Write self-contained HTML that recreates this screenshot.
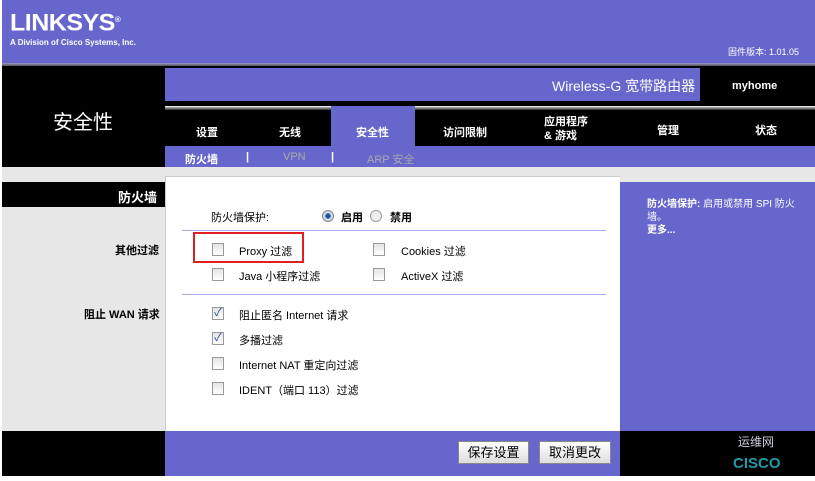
<!DOCTYPE html>
<html><head><meta charset="utf-8"><style>
*{margin:0;padding:0;box-sizing:border-box}
body{width:815px;height:481px;background:#fff;font-family:"Liberation Sans","Noto Sans CJK SC",sans-serif;position:relative;overflow:hidden;font-size:11px}
.a{position:absolute}
.p{background:#6666cc}
.cb{position:absolute;width:12px;height:13px;border:1px solid #9a9a9a;background:linear-gradient(#e4e4e4,#fff)}
.t{position:absolute;white-space:nowrap}
.w{color:#fff;font-weight:bold}
.k{color:#000;font-weight:bold}
</style></head><body>
<div class="a p" style="left:2px;top:0;width:813px;height:63px"></div>
<div class="a" style="left:2px;top:63px;width:813px;height:3px;background:linear-gradient(#9999cc,#555)"></div>
<div class="t w" style="left:10px;top:9px;font-size:25px;letter-spacing:-0.5px;font-family:'Liberation Sans',sans-serif;transform:scaleY(0.95)">LINKSYS<sup style="font-size:8px">®</sup></div>
<div class="t" style="left:10px;top:38px;color:#fff;font-size:8px;font-weight:bold">A Division of Cisco Systems, Inc.</div>
<div class="t" style="left:728px;top:45px;color:#fff;font-size:9px">固件版本: 1.01.05</div>
<div class="a" style="left:2px;top:66px;width:813px;height:101px;background:#000"></div>
<div class="a p" style="left:165px;top:68px;width:535px;height:33px"></div>
<div class="t" style="left:552px;top:76px;color:#fff;font-size:14px">Wireless-G 宽带路由器</div>
<div class="t" style="left:732px;top:80px;color:#fff;font-size:11px;font-weight:bold">myhome</div>
<div class="t" style="left:53px;top:106px;color:#fff;font-size:20px">安全性</div>
<div class="a" style="left:165px;top:106px;width:650px;height:4px;background:linear-gradient(#fff,#888,#333)"></div>
<div class="a p" style="left:331px;top:106px;width:84px;height:41px"></div>
<div class="t w" style="left:196px;top:124px">设置</div>
<div class="t w" style="left:279px;top:124px">无线</div>
<div class="t w" style="left:356px;top:124px">安全性</div>
<div class="t w" style="left:443px;top:124px">访问限制</div>
<div class="t w" style="left:544px;top:115px;line-height:14px">应用程序<br>&amp; 游戏</div>
<div class="t w" style="left:657px;top:122px">管理</div>
<div class="t w" style="left:755px;top:122px">状态</div>
<div class="a p" style="left:165px;top:146px;width:650px;height:21px"></div>
<div class="t w" style="left:185px;top:151px">防火墙</div>
<div class="t w" style="left:246px;top:151px">|</div>
<div class="t" style="left:283px;top:151px;color:#aaa">VPN</div>
<div class="t w" style="left:331px;top:151px">|</div>
<div class="t" style="left:367px;top:151px;color:#aaa">ARP 安全</div>
<div class="a" style="left:2px;top:167px;width:813px;height:264px;background:#e7e7e7"></div>
<div class="a" style="left:165px;top:176px;width:455px;height:255px;background:#fff;border-top:1px solid #ccc;border-left:1px solid #ccc"></div>
<div class="a p" style="left:620px;top:182px;width:195px;height:249px"></div>
<div class="a" style="left:2px;top:182px;width:163px;height:25px;background:#000"></div>
<div class="t w" style="left:118px;top:187px;font-size:13px">防火墙</div>
<div class="t k" style="left:115px;top:242px">其他过滤</div>
<div class="t k" style="left:84px;top:306px">阻止 WAN 请求</div>
<div class="t" style="left:211px;top:209px">防火墙保护:</div>
<div class="a" style="left:322px;top:210px;width:12px;height:12px;border-radius:50%;border:1px solid #888;background:radial-gradient(#2050a0 30%,#cde 45%)"></div>
<div class="t" style="left:341px;top:209px;font-weight:bold">启用</div>
<div class="a" style="left:370px;top:210px;width:12px;height:12px;border-radius:50%;border:1px solid #999;background:#eee"></div>
<div class="t" style="left:390px;top:209px;font-weight:bold">禁用</div>
<div class="a" style="left:182px;top:230px;width:424px;height:1px;background:#aaaaee"></div>
<div class="a" style="left:182px;top:294px;width:424px;height:1px;background:#aaaaee"></div>
<div class="a" style="left:193px;top:232px;width:111px;height:31px;border:2px solid #e02020"></div>
<div class="cb" style="left:212px;top:243px"></div><div class="t" style="left:239px;top:243px">Proxy 过滤</div>
<div class="cb" style="left:373px;top:243px"></div><div class="t" style="left:401px;top:243px">Cookies 过滤</div>
<div class="cb" style="left:212px;top:268px"></div><div class="t" style="left:239px;top:268px">Java 小程序过滤</div>
<div class="cb" style="left:373px;top:268px"></div><div class="t" style="left:401px;top:268px">ActiveX 过滤</div>
<div class="cb" style="left:212px;top:307px;color:#2040a0;font-size:11px;line-height:11px;text-align:center">✓</div><div class="t" style="left:239px;top:307px">阻止匿名 Internet 请求</div>
<div class="cb" style="left:212px;top:332px;color:#2040a0;font-size:11px;line-height:11px;text-align:center">✓</div><div class="t" style="left:239px;top:332px">多播过滤</div>
<div class="cb" style="left:212px;top:357px"></div><div class="t" style="left:239px;top:357px">Internet NAT 重定向过滤</div>
<div class="cb" style="left:212px;top:382px"></div><div class="t" style="left:239px;top:382px">IDENT（端口 113）过滤</div>
<div class="t" style="left:647px;top:198px;color:#fff;width:155px;white-space:normal;line-height:13px;font-size:10px"><b>防火墙保护:</b> 启用或禁用 SPI 防火墙。<br><b>更多...</b></div>
<div class="a" style="left:2px;top:431px;width:813px;height:45px;background:#000"></div>
<div class="a p" style="left:165px;top:431px;width:455px;height:45px"></div>
<div class="a" style="left:458px;top:441px;width:71px;height:23px;background:linear-gradient(#fff,#ddd);border:1px solid #888;font-size:13px;text-align:center;line-height:21px">保存设置</div>
<div class="a" style="left:539px;top:441px;width:72px;height:23px;background:linear-gradient(#fff,#ddd);border:1px solid #888;font-size:13px;text-align:center;line-height:21px">取消更改</div>
<div class="t" style="left:738px;top:433px;color:#ccd;font-size:12px">运维网</div>
<div class="t" style="left:733px;top:455px;color:#29a;font-size:15px;font-weight:bold">CISCO</div>
</body></html>
